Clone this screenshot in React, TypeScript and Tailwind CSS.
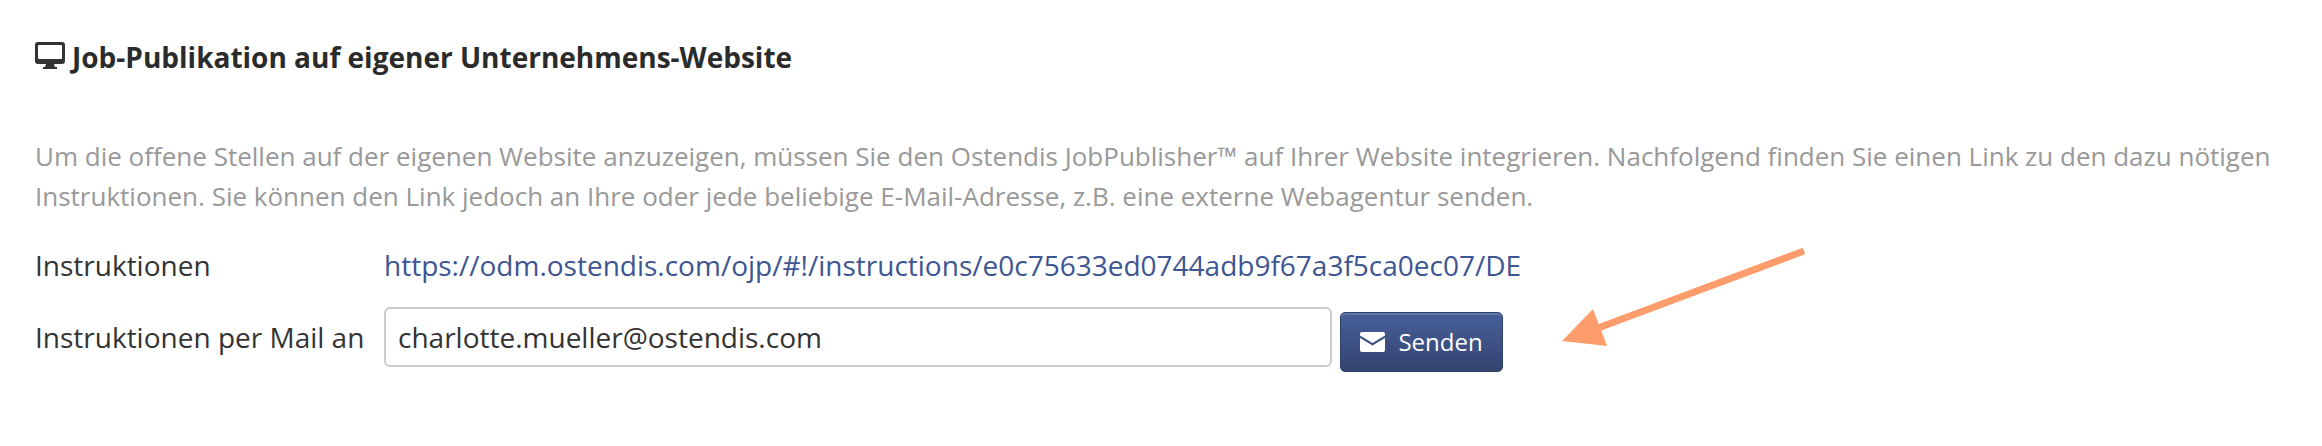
const font = { fontFamily: '"Open Sans", sans-serif' };

export default function App() {
  return (
    <div className="relative w-[2322px] h-[446px] bg-white overflow-hidden pl-[35px] pt-[38px] text-[#333333]" style={font}>
      <h2 className="flex items-center h-[38px] text-[28px] font-bold leading-[38px] text-[#2b2b2b]">
        <svg width="30" height="27" viewBox="0 0 30 27" className="mr-[7px] -mt-[4px] shrink-0">
          <path fill="#333333" d="M3 0h24a3 3 0 0 1 3 3v16a3 3 0 0 1-3 3h-8l1 3h2v2H8v-2h2l1-3H3a3 3 0 0 1-3-3V3a3 3 0 0 1 3-3z" />
          <rect x="3" y="3" width="24" height="14" rx="1" fill="#ffffff" />
        </svg>
        Job-Publikation auf eigener Unternehmens-Website
      </h2>
      <p className="mt-[60px] w-[2280px] text-[26px] leading-[40px] text-[#999999]">
        Um die offene Stellen auf der eigenen Website anzuzeigen, müssen Sie den Ostendis JobPublisher™ auf Ihrer Website integrieren. Nachfolgend finden Sie einen Link zu den dazu nötigen Instruktionen. Sie können den Link jedoch an Ihre oder jede beliebige E-Mail-Adresse, z.B. eine externe Webagentur senden.
      </p>
      <div className="mt-[29px] flex items-center h-[40px] text-[28px]">
        <span className="w-[349px]">Instruktionen</span>
        <a className="text-[#3d5592]">https://odm.ostendis.com/ojp/#!/instructions/e0c75633ed0744adb9f67a3f5ca0ec07/DE</a>
      </div>
      <div className="mt-[22px] flex items-start text-[28px]">
        <span className="w-[349px] h-[60px] leading-[60px]">Instruktionen per Mail an</span>
        <div className="w-[948px] h-[60px] rounded-[6px] border-2 border-[#cccccc] bg-white pl-[12px] flex items-center">charlotte.mueller@ostendis.com</div>
        <button className="ml-[8px] mt-[5px] w-[163px] h-[60px] rounded-[5px] border border-[#2f3f6b] bg-gradient-to-b from-[#47609a] to-[#344470] text-white text-[24px] flex items-center justify-center gap-[13px] shadow-[inset_0_2px_0_rgba(255,255,255,0.15)]">
          <svg width="25" height="20" viewBox="0 0 25 20">
            <path fill="#ffffff" d="M2 0h21a2 2 0 0 1 2 2v1.500L12.500 11 0 3.500V2a2 2 0 0 1 2-2z" />
            <path fill="#ffffff" d="M0 6l12.500 7.500L25 6v12a2 2 0 0 1-2 2H2a2 2 0 0 1-2-2z" />
          </svg>
          Senden
        </button>
      </div>
      <svg className="absolute left-[1500px] top-[240px]" width="320" height="120" viewBox="0 0 320 120">
        <path d="M304 11 L 90 91" stroke="#ff9c6b" strokeWidth="7" fill="none" />
        <polygon points="62,101 93,69 107,106" fill="#ff9c6b" />
      </svg>
    </div>
  );
}
